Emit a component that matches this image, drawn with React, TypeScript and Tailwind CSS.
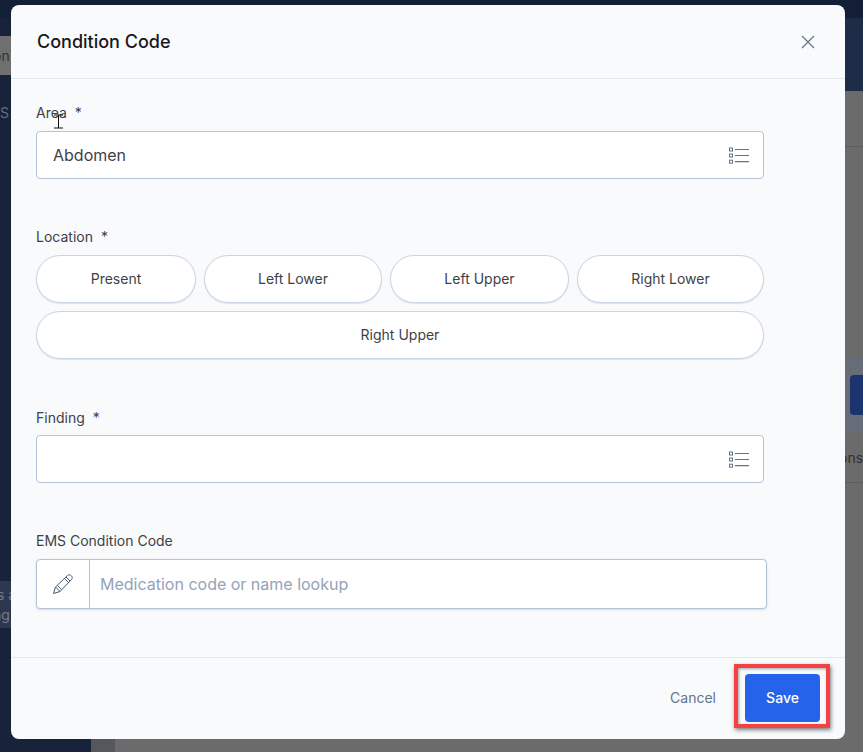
import React from "react";

const font = { fontFamily: "Inter, 'Liberation Sans', sans-serif" };

function ListIcon() {
  return (
    <svg width="20" height="17" viewBox="0 0 20 17" fill="none" className="shrink-0">
      <rect x="0.5" y="1" width="3" height="3" stroke="#64748b" strokeWidth="1" />
      <rect x="0.5" y="7" width="3" height="3" stroke="#64748b" strokeWidth="1" />
      <rect x="0.5" y="13.2" width="3" height="3" stroke="#64748b" strokeWidth="1" />
      <path d="M6 2.5H20M6 8.5H20M6 14.7H20" stroke="#64748b" strokeWidth="1.2" />
    </svg>
  );
}

function Label({ text, star }: { text: string; star?: boolean }) {
  return (
    <div className="h-[18px] text-[14px] leading-[18px] text-[#3f3f46]">
      {text}
      {star && <span className="ml-[8px]">*</span>}
    </div>
  );
}

function Select({ value }: { value?: string }) {
  return (
    <div className="mt-[8px] flex h-[48px] w-[728px] items-center justify-between rounded-[4px] border border-[#b4c3d8] bg-white pl-[16px] pr-[14px] text-[16px] text-[#3f3f46]">
      <span>{value}</span>
      <ListIcon />
    </div>
  );
}

function Pill({ text, width }: { text: string; width: string }) {
  return (
    <div
      className={`flex h-[48px] items-center justify-center rounded-[24px] border border-[#cbd5e1] bg-white pb-[2px] text-[14px] text-[#3f3f46] shadow-[0_1px_1px_rgba(148,163,184,0.25)] ${width}`}
    >
      {text}
    </div>
  );
}

export default function App() {
  return (
    <div style={font} className="relative h-[752px] w-[863px] overflow-hidden bg-[#6b6b6b]">
      {/* dimmed page behind the dialog */}
      <div className="h-[18px] bg-[#131f35]" />
      <div className="flex h-[73px] bg-[#1f2c47]" />
      <div className="absolute bottom-0 left-0 top-[18px] w-[91px] bg-[#17233b] text-[14px] text-[#8a8f98]">
        <div className="mt-[18px] flex h-[39px] w-[11px] items-center overflow-hidden whitespace-nowrap bg-[#6f6f6f] text-[#2f2f2f]">
          <span className="-ml-[7px]">on</span>
        </div>
        <div className="mt-[27px] w-[11px] overflow-hidden text-[#666c78]">S</div>
        <div className="mt-[458px] h-[47px] w-[11px] overflow-hidden whitespace-nowrap bg-[#2b3850] pt-[4px] leading-[20px] text-[#767c88]">
          <div className="-ml-[3px]">s a</div>
          <div className="-ml-[7px]">ng</div>
        </div>
      </div>
      <div className="absolute bottom-0 left-[91px] h-[13px] w-[24px] bg-[#55575c]" />
      <div className="absolute left-[845px] top-[146px] h-px w-[18px] bg-[#5c5c5c]" />
      <div className="absolute left-[845px] top-[358px] flex h-[74px] w-[18px] items-center bg-[#666d78] pl-[5px]">
        <div className="h-[40px] w-[20px] shrink-0 rounded-[4px] bg-[#1b3470]" />
      </div>
      <div className="absolute left-[845px] top-[449px] w-[18px] overflow-hidden whitespace-nowrap text-[14px] leading-[18px] text-[#2f2f2f]">
        <span className="-ml-[6px] inline-block">ons</span>
      </div>
      <div className="absolute left-[845px] top-[482px] h-px w-[18px] bg-[#5c5c5c]" />

      {/* dialog */}
      <div className="absolute left-[11px] top-[5px] flex h-[734px] w-[834px] flex-col rounded-[8px] bg-[#f8fafc]">
        <div className="flex h-[74px] shrink-0 items-center justify-between border-b border-[#e2e8f0] pl-[26px] pr-[30px]">
          <div className="text-[18px] font-[550] text-[#18181b]">Condition Code</div>
          <svg width="14" height="14" viewBox="0 0 14 14" fill="none">
            <path d="M1 1L13 13M13 1L1 13" stroke="#64748b" strokeWidth="1.3" />
          </svg>
        </div>

        <div className="flex-1 pl-[25px] pt-[25px]">
          <Label text="Area" star />
          <div className="h-px" />
          <Select value="Abdomen" />

          <div className="mt-[49px]">
            <Label text="Location" star />
            <div className="mt-[9px] flex w-[728px] flex-wrap gap-[8px]">
              <Pill text="Present" width="w-[160px]" />
              <Pill text="Left Lower" width="w-[178px]" />
              <Pill text="Left Upper" width="w-[179px]" />
              <Pill text="Right Lower" width="w-[187px]" />
              <Pill text="Right Upper" width="w-full" />
            </div>
          </div>

          <div className="mt-[50px]">
            <Label text="Finding" star />
            <Select />
          </div>

          <div className="mt-[49px]">
            <Label text="EMS Condition Code" />
            <div className="mt-[9px] flex h-[50px] w-[731px] overflow-hidden rounded-[4px] border border-[#b4c3d8] bg-white shadow-sm">
              <div className="flex w-[53px] shrink-0 items-center justify-center border-r border-[#b4c3d8]">
                <svg width="22" height="22" viewBox="0 0 22 22" fill="none" stroke="#475569" strokeWidth="1" strokeLinejoin="round">
                  <path d="M1.5 20.5L3.5 14L15.5 2.5C16.5 1.5 18 1.5 19.3 2.7C20.5 4 20.5 5.5 19.5 6.5L8 18.5L1.5 20.5Z" />
                  <path d="M14 4L18 8M3.5 14L8 18.5M5.5 12.5L9.5 16.5M12.5 5.5L16.5 9.5" />
                </svg>
              </div>
              <div className="flex flex-1 items-center pl-[10px] text-[16px] text-[#94a3b8]">
                Medication code or name lookup
              </div>
            </div>
          </div>
        </div>

        <div className="flex h-[82px] shrink-0 items-center justify-end border-t border-[#e2e8f0] pb-[2px] pr-[25px]">
          <span className="mr-[29px] text-[14px] text-[#64748b]">Cancel</span>
          <button className="h-[48px] w-[75px] rounded-[4px] bg-[#2563eb] text-[14px] font-medium text-white">
            Save
          </button>
        </div>
      </div>

      {/* annotation highlight */}
      <div className="absolute left-[734px] top-[664px] h-[64px] w-[96px] border-[4px] border-[#f44144] shadow-[1px_2px_4px_rgba(0,0,0,0.5),inset_1px_1px_3px_rgba(0,0,0,0.35)]" />

      {/* text cursor */}
      <svg className="absolute left-[54px] top-[114px]" width="9" height="15" viewBox="0 0 9 15" fill="none">
        <path d="M0 1H9M4.5 1V14M0 14H9" stroke="#111" strokeWidth="1" />
      </svg>
    </div>
  );
}
